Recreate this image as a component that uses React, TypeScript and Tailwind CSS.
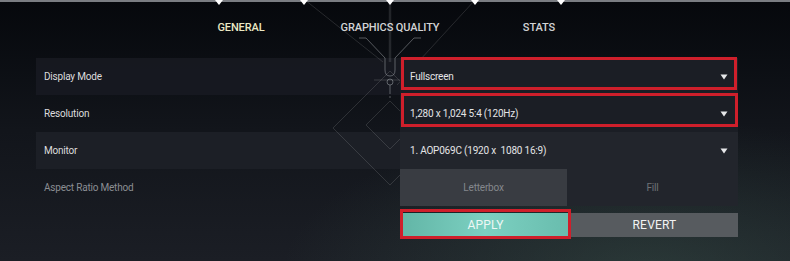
import React from "react";

const Caret = () => (
  <svg width="8" height="6" viewBox="0 0 8 6" className="shrink-0">
    <path d="M0.5 0.5 L7.5 0.5 L4 5.5 Z" fill="#e6e7e9" />
  </svg>
);

const Decor = () => (
  <svg
    width="790"
    height="261"
    viewBox="0 0 790 261"
    className="absolute inset-0 pointer-events-none"
    fill="none"
  >
    <defs>
      <clipPath id="leftside">
        <rect x="0" y="0" width="400" height="261" />
        <rect x="400" y="0" width="390" height="57" />
      </clipPath>
    </defs>
    <g clipPath="url(#leftside)">
      <g stroke="#ffffff" strokeOpacity="0.13" strokeWidth="1">
        <line x1="305" y1="0" x2="383" y2="62" />
        <line x1="475" y1="0" x2="397" y2="85" />
        {/* big diamond */}
        <path d="M390 71 L333 128 L390 185 L447 128 Z" />
        {/* inner diamond */}
        <path d="M390 101 L366 125 L390 149 L414 125 Z" />
      </g>
      {/* ornament */}
      <g stroke="#c9ccd1" strokeOpacity="0.4" strokeWidth="1">
        <line x1="359" y1="38" x2="366" y2="38" />
        <line x1="414" y1="38" x2="421" y2="38" />
        <path d="M366 38 L385 58 L385 70 Q385 76 390 76 Q395 76 395 70 L395 58 L414 38" />
        <circle cx="390" cy="82" r="3" />
        <line x1="390" y1="85" x2="390" y2="94" />
        <line x1="390" y1="96" x2="390" y2="98" />
      </g>
      <line x1="374" y1="80" x2="406" y2="80" stroke="#ffffff" strokeOpacity="0.16" />
      <rect x="388.5" y="0" width="3" height="62" fill="#ffffff" fillOpacity="0.06" />
      <line x1="390" y1="0" x2="390" y2="62" stroke="#ffffff" strokeOpacity="0.12" />
    </g>
  </svg>
);

export default function App() {
  const markers = [219, 304, 390, 475, 561];
  return (
    <div
      className="relative w-[790px] h-[261px] overflow-hidden bg-gradient-to-b from-[#06080c] via-[#12151b] to-[#1b1e25]"
      style={{ fontFamily: "Roboto, 'Noto Sans', sans-serif" }}
    >
      <div className="absolute inset-0 bg-[radial-gradient(ellipse_at_82%_105%,rgba(70,105,90,0.35),transparent_40%)]" />
      {/* top border */}
      <div className="absolute left-0 top-0 w-full h-[2px] bg-[#7a7d82]" />

      <div className="relative flex flex-col">
        {/* tabs */}
        <div className="h-[58px] flex pl-[166px] pt-[21px]">
          <div className="w-[150px] text-center text-[11px] leading-[14px] font-medium tracking-[-0.1px] text-[#ebe8c4]">
            GENERAL
          </div>
          <div className="w-[148px] text-center text-[11px] leading-[14px] font-medium tracking-[-0.1px] text-[#d2d3d5]">
            GRAPHICS QUALITY
          </div>
          <div className="w-[150px] text-center text-[11px] leading-[14px] font-medium tracking-[-0.1px] text-[#d2d3d5]">
            STATS
          </div>
        </div>

        {/* rows */}
        <div className="ml-[36px] w-[702px] flex flex-col text-[10px] leading-[12px] tracking-[-0.2px]">
          {/* Display Mode */}
          <div className="grid grid-cols-[364px_338px] h-[37px]">
            <div className="flex items-center pl-[8px] bg-[#171a21]/90 text-[#dcdcdd]">Display Mode</div>
            <div className="relative flex items-center justify-between pl-[10px] pr-[10px] bg-[#1b1e25] text-[#e4e4e6] pt-[1px]">
              <span>Fullscreen</span>
              <Caret />
              <div className="absolute left-[1px] top-[-1px] w-[336px] h-[33px] border-[3px] border-[#cf1f2b]" />
            </div>
          </div>
          {/* Resolution */}
          <div className="grid grid-cols-[364px_338px] h-[37px]">
            <div className="flex items-center pl-[8px] text-[#dcdcdd]">Resolution</div>
            <div className="relative flex items-center justify-between pl-[10px] pr-[10px] bg-[#1b1e25] text-[#e4e4e6] pt-[1px]">
              <span>1,280 x 1,024 5:4 (120Hz)</span>
              <Caret />
              <div className="absolute left-[1px] top-[-2px] w-[337px] h-[34px] border-[3px] border-[#cf1f2b]" />
            </div>
          </div>
          {/* Monitor */}
          <div className="grid grid-cols-[364px_338px] h-[37px]">
            <div className="flex items-center pl-[8px] bg-[#1c1f26] text-[#dcdcdd]">Monitor</div>
            <div className="flex items-center justify-between pl-[10px] pr-[10px] bg-[#22252c] text-[#e4e4e6]">
              <span className="whitespace-pre">1. AOP069C (1920 x  1080 16:9)</span>
              <Caret />
            </div>
          </div>
          {/* Aspect Ratio Method */}
          <div className="grid grid-cols-[364px_338px] h-[37px]">
            <div className="flex items-center pl-[8px] text-[#8b8e93]">Aspect Ratio Method</div>
            <div className="grid grid-cols-[167px_171px]">
              <div className="flex items-center justify-center bg-[#393c42] text-[#85888d]">Letterbox</div>
              <div className="flex items-center justify-center bg-[#22252c] text-[#6f7277]">Fill</div>
            </div>
          </div>

          {/* buttons */}
          <div className="grid grid-cols-[364px_338px] mt-[7px]">
            <div />
            <div className="grid grid-cols-[171px_167px] h-[24px] text-[12px] leading-[14px] tracking-[0.2px]">
              <div className="relative flex items-center justify-center bg-gradient-to-r from-[#62b5a6] via-[#7cd0c1] to-[#68bcad] text-[#eef7f5]">
                APPLY
                <div className="absolute left-0 top-[-4px] w-[171px] h-[30px] border-[3px] border-[#cf1f2b]" />
              </div>
              <div className="flex items-center justify-center bg-[#575b5f] text-[#f2f2f3]">REVERT</div>
            </div>
          </div>
        </div>
      </div>

      <Decor />
      {markers.map((x) => (
        <svg
          key={x}
          width="8"
          height="6"
          viewBox="0 0 8 6"
          className="absolute top-0"
          style={{ left: x - 4 }}
        >
          <path d="M0 0 L8 0 L4 5 Z" fill="#ffffff" />
        </svg>
      ))}
    </div>
  );
}
